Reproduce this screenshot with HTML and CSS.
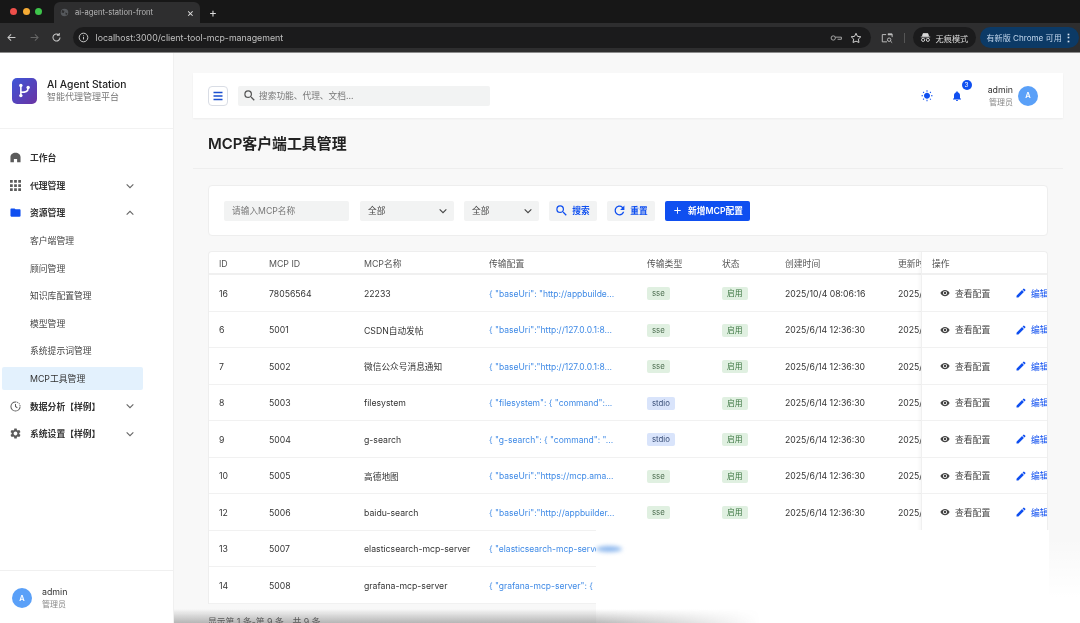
FILE: index.html
```html
<!DOCTYPE html>
<html lang="zh-CN">
<head>
<meta charset="utf-8">
<title>ai-agent-station-front</title>
<link rel="stylesheet" href="styles.css">
</head>
<body>
<svg class="defs" width="0" height="0" aria-hidden="true">
  <symbol id="i-home" viewBox="0 0 24 24"><path d="M1 22.500V11C1 5.500 6 1.500 12 1.500S23 5.500 23 11v11.500h-7.500V15h-7v7.500z"/></symbol>
  <symbol id="i-apps" viewBox="2 2 20 20"><path d="M2 2h5v5H2zM9.500 2h5v5h-5zM17 2h5v5h-5zM2 9.500h5v5H2zM9.500 9.500h5v5h-5zM17 9.500h5v5h-5zM2 17h5v5H2zM9.500 17h5v5h-5zM17 17h5v5h-5z"/></symbol>
  <symbol id="i-folder" viewBox="0 0 24 24"><path d="M10 3H3C1.900 3 1 3.900 1 5v14c0 1.100.9 2 2 2h18c1.100 0 2-.9 2-2V7c0-1.100-.9-2-2-2H12z"/></symbol>
  <symbol id="i-gear" viewBox="2.500 1.500 19 21"><path d="M19.140 12.940c.04-.3.06-.61.06-.94 0-.32-.02-.64-.07-.94l2.030-1.580a.49.49 0 0 0 .12-.61l-1.920-3.320a.488.488 0 0 0-.59-.22l-2.390.96c-.5-.38-1.030-.7-1.620-.94l-.36-2.540a.484.484 0 0 0-.48-.41h-3.840c-.24 0-.43.17-.47.41l-.36 2.540c-.59.24-1.130.57-1.620.94l-2.390-.96c-.22-.08-.47 0-.59.22L2.740 8.870c-.12.21-.08.47.12.61l2.030 1.580c-.05.3-.09.63-.09.94s.02.64.07.94l-2.030 1.580a.49.49 0 0 0-.12.61l1.920 3.320c.12.22.37.29.59.22l2.390-.96c.5.38 1.030.7 1.620.94l.36 2.540c.05.24.24.41.48.41h3.840c.24 0 .44-.17.47-.41l.36-2.540c.59-.24 1.130-.56 1.620-.94l2.390.96c.22.08.47 0 .59-.22l1.920-3.320c.12-.22.07-.47-.12-.61l-2.010-1.580zM12 15.600c-1.980 0-3.600-1.620-3.600-3.600s1.620-3.600 3.600-3.600 3.600 1.620 3.600 3.600-1.620 3.600-3.600 3.600z"/></symbol>
  <symbol id="i-eye" viewBox="0 0 24 24"><path d="M12 4.500C7 4.500 2.730 7.610 1 12c1.730 4.390 6 7.500 11 7.500s9.270-3.110 11-7.500c-1.730-4.390-6-7.500-11-7.500zM12 17c-2.760 0-5-2.240-5-5s2.240-5 5-5 5 2.240 5 5-2.240 5-5 5zm0-8c-1.660 0-3 1.340-3 3s1.340 3 3 3 3-1.340 3-3-1.340-3-3-3z"/></symbol>
  <symbol id="i-edit" viewBox="2 2 20 20"><path d="M3 17.250V21h3.750L17.810 9.940l-3.750-3.750L3 17.250zM20.710 7.040a1 1 0 0 0 0-1.410l-2.340-2.340a1 1 0 0 0-1.410 0l-1.830 1.830 3.750 3.750 1.830-1.830z"/></symbol>
  <symbol id="i-search" viewBox="2.500 2.500 18.500 18.500"><path d="M15.500 14h-.79l-.28-.27A6.470 6.470 0 0 0 16 9.500 6.500 6.500 0 1 0 9.500 16c1.610 0 3.090-.59 4.230-1.570l.27.28v.79l5 4.990L20.490 19l-4.990-5zm-6 0C7.010 14 5 11.990 5 9.500S7.010 5 9.500 5 14 7.010 14 9.500 11.990 14 9.500 14z"/></symbol>
  <symbol id="i-chev" viewBox="0 0 24 24"><path d="M4 8l8 8 8-8" fill="none" stroke="currentColor" stroke-width="2.600"/></symbol>
  <symbol id="i-chevup" viewBox="0 0 24 24"><path d="M4 16l8-8 8 8" fill="none" stroke="currentColor" stroke-width="2.600"/></symbol>
</svg>

<header class="chrome">
  <div class="tabstrip">
    <div class="lights"><i class="light red"></i><i class="light amber"></i><i class="light green"></i></div>
    <div class="tab">
      <svg class="tab-globe" viewBox="0 0 12 12"><circle cx="6" cy="6" r="5" fill="#55585c"/><path d="M3 2.500l3 1.500-1 2.500L2 6zM7 6l3 1-2 3z" fill="#2d2d2e"/></svg>
      <span class="tab-title">ai-agent-station-front</span>
      <span class="tab-close">×</span>
    </div>
    <span class="tab-new">+</span>
  </div>
  <div class="toolbar">
    <svg class="nav-ico" viewBox="0 0 14 14"><path d="M12 7H2.500M6.500 3L2.500 7l4 4" fill="none" stroke="#c8c8c8" stroke-width="1.300"/></svg>
    <svg class="nav-ico" viewBox="0 0 14 14"><path d="M2 7h9.500M7.500 3l4 4-4 4" fill="none" stroke="#666" stroke-width="1.300"/></svg>
    <svg class="nav-ico" viewBox="0 0 14 14"><path d="M11.500 7A4.500 4.500 0 1 1 10 3.600M10.500 1.200v3h-3" fill="none" stroke="#c8c8c8" stroke-width="1.300"/></svg>
    <div class="omnibox">
      <svg class="omni-info" viewBox="0 0 14 14"><circle cx="7" cy="7" r="5.500" fill="none" stroke="#d0d0d0" stroke-width="1.200"/><path d="M7 6.300v3.200M7 4.300v1" stroke="#d0d0d0" stroke-width="1.200"/></svg>
      <span class="url">localhost:3000/client-tool-mcp-management</span>
      <svg class="omni-key" viewBox="0 0 14 14"><circle cx="3.800" cy="7" r="2.500" fill="none" stroke="#b8b8b8" stroke-width="1"/><path d="M6.300 6h7v2.500h-4.500" fill="none" stroke="#b8b8b8" stroke-width="1"/></svg>
      <svg class="omni-star" viewBox="0 0 14 14"><path d="M7 1.500l1.700 3.600 3.900.5-2.900 2.700.8 3.900L7 10.700l-3.500 1.500.8-3.900L1.400 5.600l3.900-.5z" fill="none" stroke="#d8d8d8" stroke-width="1.100"/></svg>
    </div>
    <svg class="tb-reader" viewBox="0 0 14 14"><path d="M6 3H1.500v8.500H7M8 2.500h5V6" fill="none" stroke="#c0c0c0" stroke-width="1.100"/><rect x="8" y="1.800" width="5" height="2" fill="#c0c0c0"/><circle cx="9.500" cy="9" r="2" fill="none" stroke="#c0c0c0" stroke-width="1.100"/><path d="M11 10.500l2 2" stroke="#c0c0c0" stroke-width="1.100"/></svg>
    <i class="tb-sep"></i>
    <div class="pill-incog">
      <svg class="incog-ico" viewBox="0 0 14 14"><path d="M4 2h6l1 3.500H3zM1 6.300h12" fill="#d8d8d8" stroke="#d8d8d8"/><circle cx="4" cy="10" r="2" fill="none" stroke="#d8d8d8" stroke-width="1.200"/><circle cx="10" cy="10" r="2" fill="none" stroke="#d8d8d8" stroke-width="1.200"/></svg>
      <span>无痕模式</span>
    </div>
    <div class="pill-update"><span>有新版 Chrome 可用</span><b class="update-dots">⋮</b></div>
  </div>
</header>

<div class="app">
  <aside class="sidebar">
    <div class="brand">
      <div class="brand-logo">
        <svg viewBox="0 0 14 14"><path d="M4 2.500v9M4 8.500c4 0 6-.5 6-3.500" fill="none" stroke="#fff" stroke-width="1.300"/><circle cx="4" cy="2.800" r="1.400" fill="#fff"/><circle cx="4" cy="11.200" r="1.400" fill="#fff"/><circle cx="10" cy="4.500" r="1.400" fill="#fff"/></svg>
      </div>
      <div class="brand-text">
        <div class="brand-title">AI Agent Station</div>
        <div class="brand-sub">智能代理管理平台</div>
      </div>
    </div>
    <nav class="nav">
      <div class="nav-item"><svg class="nav-icon"><use href="#i-home"/></svg><span>工作台</span></div>
      <div class="nav-item"><svg class="nav-icon"><use href="#i-apps"/></svg><span>代理管理</span><svg class="nav-chev"><use href="#i-chev"/></svg></div>
      <div class="nav-item is-open"><svg class="nav-icon"><use href="#i-folder"/></svg><span>资源管理</span><svg class="nav-chev"><use href="#i-chevup"/></svg></div>
      <div class="nav-sub">客户端管理</div>
      <div class="nav-sub">顾问管理</div>
      <div class="nav-sub">知识库配置管理</div>
      <div class="nav-sub">模型管理</div>
      <div class="nav-sub">系统提示词管理</div>
      <div class="nav-sub is-active">MCP工具管理</div>
      <div class="nav-item"><svg class="nav-icon" viewBox="0 0 24 24"><circle cx="12" cy="12" r="10" fill="none" stroke="currentColor" stroke-width="2.200" stroke-dasharray="48 2 2 2 2 2 2 3"/><path d="M12 6.500V12l4 3" fill="none" stroke="currentColor" stroke-width="2.200"/></svg><span>数据分析【样例】</span><svg class="nav-chev"><use href="#i-chev"/></svg></div>
      <div class="nav-item"><svg class="nav-icon"><use href="#i-gear"/></svg><span>系统设置【样例】</span><svg class="nav-chev"><use href="#i-chev"/></svg></div>
    </nav>
    <div class="side-user">
      <div class="avatar">A</div>
      <div>
        <div class="user-name">admin</div>
        <div class="user-role">管理员</div>
      </div>
    </div>
  </aside>

  <main class="main">
    <div class="topbar">
      <button class="menu-btn"><svg viewBox="0 0 14 14"><path d="M2.500 3.500h9M2.500 7h9M2.500 10.500h9" stroke="#1a4fd0" stroke-width="1.300"/></svg></button>
      <div class="top-search"><svg class="top-search-ico"><use href="#i-search"/></svg><span>搜索功能、代理、文档...</span></div>
      <div class="top-right">
        <svg class="top-ico" viewBox="0 0 24 24"><path d="M6.760 4.840l-1.800-1.790-1.410 1.410 1.790 1.790 1.420-1.410zM4 10.500H1v2h3v-2zm9-9.950h-2V3.500h2V.55zm7.450 3.910l-1.410-1.410-1.790 1.790 1.410 1.410 1.790-1.790zm-3.210 13.700l1.790 1.800 1.410-1.410-1.800-1.790-1.400 1.400zM20 10.500v2h3v-2h-3zm-8-5c-3.310 0-6 2.690-6 6s2.690 6 6 6 6-2.690 6-6-2.690-6-6-6zm-1 16.950h2V19.500h-2v2.950zm-7.450-3.910l1.410 1.410 1.790-1.800-1.410-1.410-1.790 1.800z"/></svg>
        <div class="bell">
          <svg class="top-ico" viewBox="0 0 24 24"><path d="M12 22c1.100 0 2-.9 2-2h-4c0 1.100.9 2 2 2zm6-6v-5c0-3.070-1.630-5.640-4.500-6.320V4c0-.83-.67-1.500-1.500-1.500s-1.500.67-1.500 1.500v.68C7.640 5.360 6 7.920 6 11v5l-2 2v1h16v-1l-2-2z"/></svg>
          <span class="bell-badge">3</span>
        </div>
        <div class="top-user">
          <div class="user-name">admin</div>
          <div class="user-role">管理员</div>
        </div>
        <div class="avatar">A</div>
      </div>
    </div>

    <h1 class="page-title">MCP客户端工具管理</h1>

    <section class="filters">
      <div class="field field-name">请输入MCP名称</div>
      <div class="field field-sel1"><span>全部</span><svg class="sel-chev"><use href="#i-chev"/></svg></div>
      <div class="field field-sel2"><span>全部</span><svg class="sel-chev"><use href="#i-chev"/></svg></div>
      <button class="btn btn-soft"><svg class="btn-ico"><use href="#i-search"/></svg>搜索</button>
      <button class="btn btn-soft"><svg class="btn-ico" viewBox="3 3 18 18"><path d="M17.650 6.350A7.958 7.958 0 0 0 12 4c-4.420 0-7.990 3.580-7.990 8s3.570 8 7.990 8c3.730 0 6.840-2.550 7.730-6h-2.080A5.990 5.990 0 0 1 12 18c-3.310 0-6-2.690-6-6s2.690-6 6-6c1.660 0 3.140.69 4.220 1.780L13 11h7V4l-2.350 2.350z"/></svg>重置</button>
      <button class="btn btn-primary"><svg class="btn-ico" viewBox="0 0 24 24"><path d="M19 13h-6v6h-2v-6H5v-2h6V5h2v6h6v2z"/></svg>新增MCP配置</button>
    </section>

    <section class="table-card">
      <div class="tbl-main">
        <div class="row row-head"><span>ID</span><span>MCP ID</span><span>MCP名称</span><span>传输配置</span><span>传输类型</span><span>状态</span><span>创建时间</span><span>更新时间</span></div>
        <div class="row"><span>16</span><span>78056564</span><span>22233</span><a class="cfg">{ "baseUri": "http://appbuilde...</a><span><em class="tag tag-sse">sse</em></span><span><em class="tag tag-on">启用</em></span><span>2025/10/4 08:06:16</span><span>2025/10/4 08:06:16</span></div>
        <div class="row"><span>6</span><span>5001</span><span>CSDN自动发帖</span><a class="cfg">{ "baseUri":"http://127.0.0.1:8...</a><span><em class="tag tag-sse">sse</em></span><span><em class="tag tag-on">启用</em></span><span>2025/6/14 12:36:30</span><span>2025/6/14 12:36:30</span></div>
        <div class="row"><span>7</span><span>5002</span><span>微信公众号消息通知</span><a class="cfg">{ "baseUri":"http://127.0.0.1:8...</a><span><em class="tag tag-sse">sse</em></span><span><em class="tag tag-on">启用</em></span><span>2025/6/14 12:36:30</span><span>2025/6/14 12:36:30</span></div>
        <div class="row"><span>8</span><span>5003</span><span>filesystem</span><a class="cfg">{ "filesystem": { "command":...</a><span><em class="tag tag-stdio">stdio</em></span><span><em class="tag tag-on">启用</em></span><span>2025/6/14 12:36:30</span><span>2025/6/14 12:36:30</span></div>
        <div class="row"><span>9</span><span>5004</span><span>g-search</span><a class="cfg">{ "g-search": { "command": "...</a><span><em class="tag tag-stdio">stdio</em></span><span><em class="tag tag-on">启用</em></span><span>2025/6/14 12:36:30</span><span>2025/6/14 12:36:30</span></div>
        <div class="row"><span>10</span><span>5005</span><span>高德地图</span><a class="cfg">{ "baseUri":"https://mcp.ama...</a><span><em class="tag tag-sse">sse</em></span><span><em class="tag tag-on">启用</em></span><span>2025/6/14 12:36:30</span><span>2025/6/14 12:36:30</span></div>
        <div class="row"><span>12</span><span>5006</span><span>baidu-search</span><a class="cfg">{ "baseUri":"http://appbuilder...</a><span><em class="tag tag-sse">sse</em></span><span><em class="tag tag-on">启用</em></span><span>2025/6/14 12:36:30</span><span>2025/6/14 12:36:30</span></div>
        <div class="row"><span>13</span><span>5007</span><span>elasticsearch-mcp-server</span><a class="cfg">{ "elasticsearch-mcp-server": {</a></div>
        <div class="row"><span>14</span><span>5008</span><span>grafana-mcp-server</span><a class="cfg">{ "grafana-mcp-server": {</a></div>
      </div>
      <div class="tbl-ops">
        <div class="op-head">操作</div>
        <div class="op-row"><span class="op-view"><svg class="op-ico"><use href="#i-eye"/></svg>查看配置</span><span class="op-edit"><svg class="op-ico"><use href="#i-edit"/></svg>编辑</span></div>
        <div class="op-row"><span class="op-view"><svg class="op-ico"><use href="#i-eye"/></svg>查看配置</span><span class="op-edit"><svg class="op-ico"><use href="#i-edit"/></svg>编辑</span></div>
        <div class="op-row"><span class="op-view"><svg class="op-ico"><use href="#i-eye"/></svg>查看配置</span><span class="op-edit"><svg class="op-ico"><use href="#i-edit"/></svg>编辑</span></div>
        <div class="op-row"><span class="op-view"><svg class="op-ico"><use href="#i-eye"/></svg>查看配置</span><span class="op-edit"><svg class="op-ico"><use href="#i-edit"/></svg>编辑</span></div>
        <div class="op-row"><span class="op-view"><svg class="op-ico"><use href="#i-eye"/></svg>查看配置</span><span class="op-edit"><svg class="op-ico"><use href="#i-edit"/></svg>编辑</span></div>
        <div class="op-row"><span class="op-view"><svg class="op-ico"><use href="#i-eye"/></svg>查看配置</span><span class="op-edit"><svg class="op-ico"><use href="#i-edit"/></svg>编辑</span></div>
        <div class="op-row"><span class="op-view"><svg class="op-ico"><use href="#i-eye"/></svg>查看配置</span><span class="op-edit"><svg class="op-ico"><use href="#i-edit"/></svg>编辑</span></div>
      </div>
    </section>
    <div class="pager-info">显示第 1 条-第 9 条，共 9 条</div>

    <div class="veil-table"></div>
    <div class="veil-edge"></div>
    <div class="veil-smear"></div>
    <div class="veil-shadow"></div>
  </main>
</div>
</body>
</html>
```
FILE: styles.css
```css
* { box-sizing: border-box; }
html, body { margin: 0; height: 100%; overflow: hidden; }
body {
  width: 1080px; height: 623px;
  display: flex; flex-direction: column;
  font-family: Inter, "Noto Sans CJK SC", sans-serif;
  font-size: 8.700px; color: #333; background: #fff;
}
.defs { position: absolute; }
svg { display: block; flex: none; }
em { font-style: normal; }
.chrome, .app { filter: blur(.3px); }

/* browser chrome */
.chrome { flex: none; height: 53px; background: #2e2e2f; border-bottom: 1px solid #8c8c8c; }
.tabstrip { height: 23px; background: #171717; display: flex; align-items: flex-end; }
.lights { display: flex; gap: 5.600px; width: 54px; padding: 0 0 8.500px 10px; }
.light { width: 7px; height: 7px; border-radius: 50%; }
.red { background: #ee4f4a; } .amber { background: #f5ab35; } .green { background: #3ec54b; }
.tab { width: 146px; height: 21px; background: #2e2e2f; border-radius: 6px 6px 0 0; display: flex; align-items: center; padding: 0 6px 0 6px; color: #b9b9b9; font-size: 7.600px; }
.tab-globe { width: 9px; height: 9px; }
.tab-title { margin-left: 6px; flex: 1; }
.tab-close { font-size: 11px; color: #ddd; }
.tab-new { margin-left: 9px; color: #ddd; font-size: 12px; line-height: 20px; }
.toolbar { height: 29px; display: flex; align-items: center; padding-left: 6px; }
.nav-ico { width: 11px; height: 11px; margin-right: 11.500px; }
.omnibox { width: 798px; height: 21px; margin-left: -1px; background: #1b1b1c; border-radius: 11px; display: flex; align-items: center; padding: 0 9px 0 5px; color: #ccc; }
.omni-info { width: 11px; height: 11px; }
.url { margin-left: 7px; flex: 1; font-size: 8.800px; color: #c0c0c0; }
.omni-key { width: 12px; height: 12px; margin-right: 8px; }
.omni-star { width: 12px; height: 12px; }
.tb-reader { width: 12px; height: 12px; margin-left: 10px; }
.tb-sep { width: 1px; height: 10px; background: #555; margin: 0 8px 0 11px; }
.pill-incog { width: 63px; height: 21px; background: #1b1b1c; border-radius: 11px; display: flex; align-items: center; gap: 5px; padding-left: 7px; color: #ddd; font-size: 8.200px; white-space: nowrap; }
.incog-ico { width: 11px; height: 11px; }
.pill-update { width: 99px; height: 21px; margin-left: 4px; background: #0c3a66; border-radius: 11px; display: flex; align-items: center; justify-content: space-between; padding: 0 5px 0 7px; color: #c4d8ee; font-size: 8.100px; white-space: nowrap; }
.update-dots { font-size: 11px; color: #dce8f5; }

/* app frame */
.app { flex: 1; min-height: 0; display: flex; }
.sidebar { flex: none; width: 174px; background: #fff; border-right: 1px solid #f0f0f0; display: flex; flex-direction: column; }
.brand { height: 76px; display: flex; align-items: center; padding: 0 0 0 12px; gap: 10px; border-bottom: 1px solid #f2f2f2; }
.brand-logo { width: 25px; height: 26px; border-radius: 5px; background: linear-gradient(135deg, #3d56d8, #6b33a3); display: flex; align-items: center; justify-content: center; }
.brand-logo svg { width: 17px; height: 17px; }
.brand-title { font-size: 10.300px; font-weight: 500; color: #222; line-height: 13px; }
.brand-sub { font-size: 9px; color: #777; line-height: 12px; }
.nav { flex: 1; padding: 15px 0 0; color: #333; }
.nav-item { height: 27.600px; display: flex; align-items: center; padding-left: 10px; font-size: 8.800px; font-weight: 600; color: #333; position: relative; }
.nav-item span { margin-left: 9px; }
.nav-icon { width: 11px; height: 11px; fill: #5b5b5b; color: #5b5b5b; }
.is-open .nav-icon { fill: #0f4ff0; }
.nav-chev { position: absolute; left: 125px; top: 9px; width: 10px; height: 10px; color: #666; }
.nav-sub { height: 27.600px; display: flex; align-items: center; padding-left: 30px; font-size: 8.800px; color: #444; }
.nav-sub.is-active { background: #e3f1fd; width: 141px; height: 23px; margin: 2.300px 0 2.300px 2px; padding-left: 28px; border-radius: 2px; color: #333; }
.side-user { height: 53px; border-top: 1px solid #f0f0f0; display: flex; align-items: center; gap: 10px; padding: 2px 0 0 12px; }
.avatar { width: 20px; height: 20px; border-radius: 50%; background: #5aa0f8; color: #fff; font-size: 7.500px; font-weight: 600; display: flex; align-items: center; justify-content: center; flex: none; }
.user-name { font-size: 8.800px; line-height: 12px; color: #333; }
.user-role { font-size: 8px; line-height: 12px; color: #888; }

/* main */
.main { flex: 1; min-width: 0; background: #f8f8f8; padding: 20px 17px 0 19px; position: relative; overflow: hidden; }
.topbar { height: 45px; background: #fff; box-shadow: 0 1px 2px rgba(0,0,0,.05); display: flex; align-items: center; padding: 0 25px 0 15px; }
.menu-btn { width: 20px; height: 20px; padding: 0; background: #fff; border: 1px solid #d9dde5; border-radius: 4px; display: flex; align-items: center; justify-content: center; }
.menu-btn svg { width: 14px; height: 14px; }
.top-search { width: 252px; height: 20px; margin-left: 10px; background: #f2f3f3; border-radius: 2px; display: flex; align-items: center; gap: 4px; padding-left: 6px; color: #777; font-size: 8.700px; }
.top-search-ico { width: 11px; height: 11px; fill: #555; }
.top-right { margin-left: auto; display: flex; align-items: center; }
.top-ico { width: 12px; height: 12px; fill: #0f4ff0; }
.bell { margin-left: 18px; position: relative; }
.bell-badge { position: absolute; left: 11px; top: -10px; width: 10px; height: 10px; border-radius: 50%; background: #0f4ff0; color: #fff; font-size: 6.500px; display: flex; align-items: center; justify-content: center; }
.top-user { margin: 0 5px 0 25px; text-align: right; }

.page-title { margin: 17px 0 0 15px; height: 33px; font-size: 14.900px; line-height: 18px; font-weight: 600; color: #222; position: relative; }
.page-title::after { content: ""; position: absolute; left: -15px; width: 870px; top: 33px; height: 1px; background: #eeeeee; }

.filters { width: 840px; height: 51px; margin: 17px 0 0 15px; background: #fff; border: 1px solid #eeeeee; border-radius: 4px; display: flex; align-items: center; padding-left: 15px; }
.field { height: 20px; background: #f2f3f3; border-radius: 2px; display: flex; align-items: center; justify-content: space-between; padding: 0 6px 0 8px; font-size: 8.700px; color: #444; flex: none; }
.field-name { width: 125px; margin-right: 11px; color: #777; }
.field-sel1 { width: 94px; margin-right: 10px; }
.field-sel2 { width: 75px; margin-right: 10px; }
.sel-chev { width: 10px; height: 10px; color: #444; }
.btn { height: 20px; border: 0; border-radius: 2px; padding: 0; display: flex; align-items: center; justify-content: center; gap: 5px; font: 600 8.700px Inter, "Noto Sans CJK SC", sans-serif; flex: none; }
.btn-soft { width: 48px; margin-right: 10px; background: #f2f3f3; color: #0f4ff0; }
.btn-primary { width: 85px; background: #0f4ff0; color: #fff; }
.btn-ico { width: 11px; height: 11px; fill: currentColor; }

.table-card { width: 840px; height: 353px; margin: 15px 0 0 15px; background: #fff; border: 1px solid #eeeeee; border-bottom: 0; border-radius: 4px 4px 0 0; display: flex; overflow: hidden; }
.tbl-main { width: 712px; flex: none; overflow: hidden; }
.row { height: 36.500px; padding-top: 2px; display: grid; grid-template-columns: 50px 95px 125px 158px 75px 63px 113px 33px; align-items: center; border-bottom: 1px solid #f1f1f1; white-space: nowrap; }
.row > * { padding-left: 10px; min-width: 0; }
.row > :nth-child(8) { overflow: hidden; }
.row-head { height: 23px; border-bottom: 2px solid #f0f0f0; color: #555; font-size: 8.800px; }
.cfg { color: #3f8ae6; overflow: hidden; font-size: 8.500px; }
.tag { display: inline-block; height: 13px; line-height: 13px; padding: 0 5px; border-radius: 2px; font-size: 7.800px; }
.tag-sse { background: #e0f0e1; color: #4e6f52; }
.tag-on { background: #e0f0e1; color: #38733e; }
.tag-stdio { background: #d9e4fb; color: #3a4f78; }

.tbl-ops { flex: 1; min-width: 0; border-left: 1px solid #f0f0f0; box-shadow: -2px 0 3px rgba(0,0,0,.03); position: relative; white-space: nowrap; overflow: hidden; }
.op-head { height: 23px; border-bottom: 2px solid #f0f0f0; line-height: 23px; padding-left: 10px; color: #555; font-size: 8.800px; }
.op-row { height: 36.500px; padding-top: 1px; display: flex; align-items: center; padding-left: 18px; border-bottom: 1px solid #f1f1f1; }
.op-view { width: 76px; flex: none; display: flex; align-items: center; gap: 5px; color: #444; font-size: 8.800px; }
.op-edit { flex: none; display: flex; align-items: center; gap: 5px; color: #0f4ff0; font-size: 8.800px; }
.op-ico { width: 10px; height: 10px; fill: currentColor; }

.pager-info { margin: 11px 0 0 15px; font-size: 8.800px; color: #555; white-space: nowrap; }

/* the white smudge that lies over the bottom right of the capture */
.veil-table { position: absolute; left: 422px; top: 477px; width: 453px; bottom: 0; background: #fff; }
.veil-edge { position: absolute; left: 875px; right: 0; top: 485px; bottom: 0; background: linear-gradient(180deg, rgba(255,255,255,0), #fff 70%); }
.veil-smear { position: absolute; left: 422px; top: 493px; width: 26px; height: 6px; border-radius: 50%; background: #8db8ee; filter: blur(2px); }
.veil-shadow { position: absolute; left: 0; right: 320px; bottom: 0; height: 14px; background: linear-gradient(180deg, rgba(90,90,90,0), rgba(90,90,90,.42)); -webkit-mask-image: linear-gradient(90deg, #000 72%, transparent); mask-image: linear-gradient(90deg, #000 72%, transparent); }
```
